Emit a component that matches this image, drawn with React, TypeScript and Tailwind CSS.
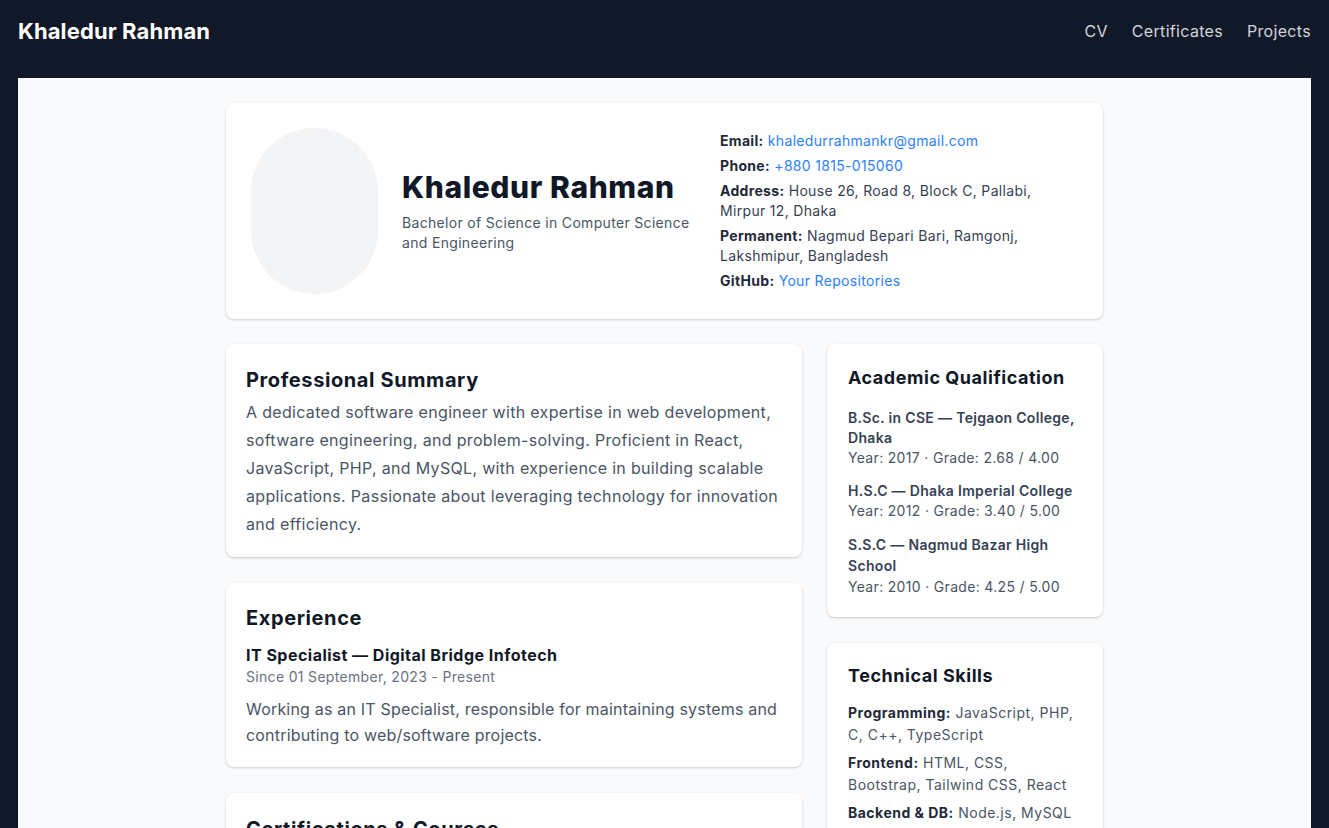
import React from "react";

const font = { fontFamily: "Inter, 'Noto Sans', sans-serif" };

function Card({ children, className = "" }: { children: React.ReactNode; className?: string }) {
  return (
    <div className={`bg-white rounded-lg shadow-[0_1px_3px_rgba(0,0,0,0.12),0_1px_2px_rgba(0,0,0,0.08)] ${className}`}>
      {children}
    </div>
  );
}

export default function App() {
  return (
    <div className="min-h-screen bg-[#111827] text-gray-800 tracking-[0.02em]" style={font}>
      <nav className="h-[62px] px-[18px] flex items-center justify-between">
        <div className="text-white text-[22px] font-bold tracking-[0.005em]">Khaledur Rahman</div>
        <div className="flex items-center gap-6 text-gray-300 text-base">
          <span>CV</span>
          <span>Certificates</span>
          <span>Projects</span>
        </div>
      </nav>
      <div className="px-[18px] pt-4">
        <main className="bg-[#f9fafb] min-h-[760px] pt-[25px] pb-10">
          <div className="w-[877px] mx-auto">
            <Card className="p-[25px] flex items-center gap-6">
              <div className="w-[127px] h-[166px] rounded-full bg-gray-100 shrink-0" />
              <div className="w-[294px] shrink-0">
                <h1 className="text-3xl font-extrabold text-gray-900 leading-9 tracking-[0.02em]">Khaledur Rahman</h1>
                <p className="mt-2 text-sm leading-5 text-gray-600">
                  Bachelor of Science in Computer Science and Engineering
                </p>
              </div>
              <div className="flex-1 flex flex-col gap-[5px] text-sm leading-5 text-gray-700">
                <div>
                  <span className="font-bold text-gray-800">Email:</span>{" "}
                  <span className="text-blue-500">khaledurrahmankr@gmail.com</span>
                </div>
                <div>
                  <span className="font-bold text-gray-800">Phone:</span>{" "}
                  <span className="text-blue-500">+880 1815-015060</span>
                </div>
                <div>
                  <span className="font-bold text-gray-800">Address:</span> House 26, Road 8, Block C, Pallabi, Mirpur 12, Dhaka
                </div>
                <div>
                  <span className="font-bold text-gray-800">Permanent:</span> Nagmud Bepari Bari, Ramgonj, Lakshmipur, Bangladesh
                </div>
                <div>
                  <span className="font-bold text-gray-800">GitHub:</span>{" "}
                  <span className="text-blue-500">Your Repositories</span>
                </div>
              </div>
            </Card>

            <div className="mt-[25px] grid grid-cols-[1fr_276px] gap-[25px] items-start">
              <div className="flex flex-col gap-[26px]">
                <Card className="px-5 pt-[22px] pb-[19px]">
                  <h2 className="text-xl font-bold text-gray-900 leading-7 mb-[4px] tracking-[0.03em]">Professional Summary</h2>
                  <p className="text-base leading-7 text-gray-600">
                    A dedicated software engineer with expertise in web development, software engineering, and problem-solving. Proficient in React, JavaScript, PHP, and MySQL, with experience in building scalable applications. Passionate about leveraging technology for innovation and efficiency.
                  </p>
                </Card>
                <Card className="px-5 pt-[21px] pb-[19px]">
                  <h2 className="text-xl font-bold text-gray-900 leading-7 mb-[11px] tracking-[0.03em]">Experience</h2>
                  <h3 className="text-base font-bold text-gray-900 leading-6 tracking-[0.03em]">IT Specialist — Digital Bridge Infotech</h3>
                  <p className="text-sm leading-5 text-gray-500">Since 01 September, 2023 - Present</p>
                  <p className="mt-[9px] text-base leading-[26px] text-gray-600 tracking-[0.012em]">
                    Working as an IT Specialist, responsible for maintaining systems and contributing to web/software projects.
                  </p>
                </Card>
                <Card className="px-5 pt-[22px] pb-5">
                  <h2 className="text-xl font-bold text-gray-900 leading-7 mb-3 tracking-[0.03em]">Certifications &amp; Courses</h2>
                  <p className="text-base leading-7 text-gray-600">Certificates and completed courses.</p>
                </Card>
              </div>

              <div className="flex flex-col gap-[26px]">
                <Card className="px-[21px] pt-5 pb-5">
                  <h2 className="text-lg font-bold text-gray-900 leading-7 mb-4 tracking-[0.03em]">Academic Qualification</h2>
                  <div className="flex flex-col gap-[13px] text-sm leading-5">
                    <div>
                      <div className="font-semibold text-gray-700">B.Sc. in CSE — Tejgaon College, Dhaka</div>
                      <div className="text-gray-600">Year: 2017 · Grade: 2.68 / 4.00</div>
                    </div>
                    <div>
                      <div className="font-semibold text-gray-700">H.S.C — Dhaka Imperial College</div>
                      <div className="text-gray-600">Year: 2012 · Grade: 3.40 / 5.00</div>
                    </div>
                    <div>
                      <div className="font-semibold text-gray-700 leading-[21px]">S.S.C — Nagmud Bazar High School</div>
                      <div className="text-gray-600 leading-[21px]">Year: 2010 · Grade: 4.25 / 5.00</div>
                    </div>
                  </div>
                </Card>
                <Card className="px-[21px] pt-[19px] pb-5">
                  <h2 className="text-lg font-bold text-gray-900 leading-7 mb-3 tracking-[0.03em]">Technical Skills</h2>
                  <div className="flex flex-col gap-[7px] text-sm leading-[21.5px] text-gray-600 tracking-[0.035em]">
                    <div>
                      <span className="font-bold text-gray-800">Programming:</span> JavaScript, PHP, C, C++, TypeScript
                    </div>
                    <div>
                      <span className="font-bold text-gray-800">Frontend:</span> HTML, CSS, Bootstrap, Tailwind CSS, React
                    </div>
                    <div>
                      <span className="font-bold text-gray-800">Backend &amp; DB:</span> Node.js, MySQL
                    </div>
                    <div>
                      <span className="font-bold text-gray-800">Tools:</span> Git, GitHub, VS Code
                    </div>
                  </div>
                </Card>
              </div>
            </div>
          </div>
        </main>
      </div>
    </div>
  );
}
